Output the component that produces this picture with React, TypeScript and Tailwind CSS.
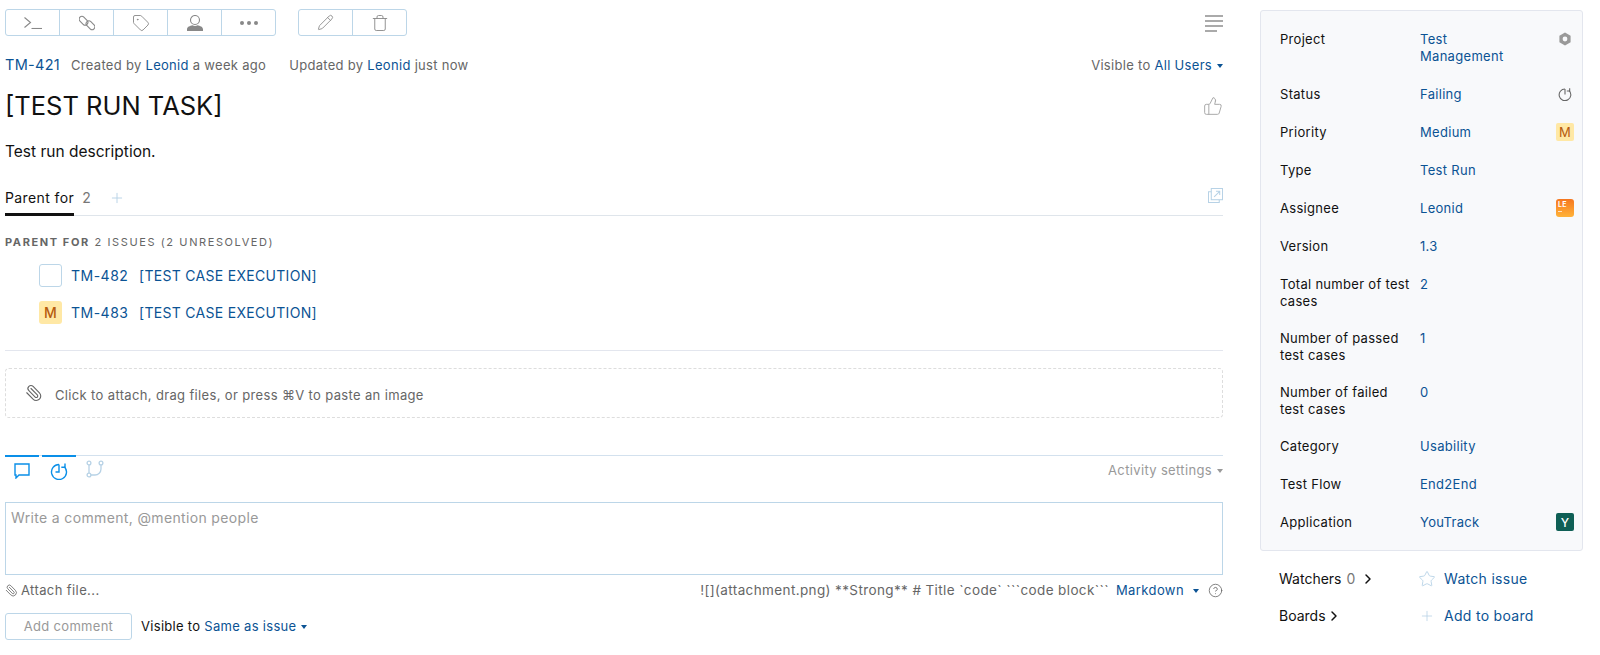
import { ChevronRight, CircleHelp, Paperclip, Pencil, Plus, Star, Tag, ThumbsUp, Trash } from "lucide-react";

const link = "text-[#0b5394]";

function Caret() {
  return <span className="ml-[5px] inline-block h-0 w-0 border-x-[3px] border-t-[4px] border-x-transparent border-t-current align-middle" />;
}

function HistoryIcon({ className, full }: { className: string; full?: boolean }) {
  return (
    <svg viewBox="0 0 18 18" fill="none" stroke="currentColor" strokeWidth="1.4" className={className}>
      <path d="M9 2.500A7.500 7.500 0 1 0 14.300 4.700" />
      <path d={full ? "M9 2.500v7.500H5.500" : "M9 2.500v7"} />
      <path d="M15 1.500v3.700H11.300" />
    </svg>
  );
}

const toolbarOne = [
  <svg key="t" viewBox="0 0 18 12" fill="none" stroke="#888" strokeWidth="1.1" className="h-[12px] w-[18px]"><path d="M.5 .5l6 5-6 5" /><path d="M7.500 11.500H18" /></svg>,
  <svg key="l" viewBox="0 0 16 16" fill="none" stroke="#888" strokeWidth="1.1" className="h-[16px] w-[16px]"><rect x="-.5" y="3" width="10" height="5.500" rx="2.750" transform="rotate(45 4.500 5.750)" /><rect x="6.500" y="7.500" width="10" height="5.500" rx="2.750" transform="rotate(45 11.500 10.250)" /></svg>,
  <Tag key="g" className="h-[18px] w-[18px] text-[#888]" strokeWidth={1.2} />,
  <svg key="u" viewBox="0 0 16 16" className="h-[16px] w-[16px]"><ellipse cx="8" cy="5" rx="4.500" ry="4.500" fill="none" stroke="#888" strokeWidth="1.1" /><path d="M0 16v-1.800c0-2.400 3-3.400 5.500-4 1.400 1 3.600 1 5 0 2.500.6 5.500 1.600 5.500 4V16z" fill="#888" /></svg>,
  <span key="d" className="flex gap-[3px]">{[0, 1, 2].map((i) => <span key={i} className="h-[4px] w-[4px] rounded-full bg-[#888]" />)}</span>,
];

const fields: { label: string; value: string; icon?: React.ReactNode; tall?: boolean }[] = [
  { label: "Project", value: "Test Management", icon: <svg viewBox="0 0 14 14" className="h-[14px] w-[14px]"><path d="M7 .5l5.600 3.200v6.600L7 13.500 1.400 10.300V3.700z" fill="#999" /><circle cx="7" cy="7" r="2.400" fill="#f8f9fb" /></svg> },
  { label: "Status", value: "Failing", icon: <HistoryIcon className="h-[14px] w-[14px] text-[#666]" /> },
  { label: "Priority", value: "Medium", icon: <span className="flex h-[18px] w-[18px] items-center justify-center rounded-[2px] bg-[#ffe8a5] text-[13px] text-[#b65a0e]">M</span> },
  { label: "Type", value: "Test Run" },
  { label: "Assignee", value: "Leonid", icon: <span className="flex h-[18px] w-[18px] flex-col rounded-[3px] bg-gradient-to-b from-[#f5761f] to-[#ffb238] pl-[2px] pt-[2px] text-[7px] leading-[8px] font-bold text-white">LE<span className="mt-[2px] h-px w-[4px] bg-white/70" /></span> },
  { label: "Version", value: "1.3" },
  { label: "Total number of test cases", value: "2", tall: true },
  { label: "Number of passed test cases", value: "1", tall: true },
  { label: "Number of failed test cases", value: "0", tall: true },
  { label: "Category", value: "Usability" },
  { label: "Test Flow", value: "End2End" },
  { label: "Application", value: "YouTrack", icon: <span className="flex h-[18px] w-[18px] items-center justify-center rounded-[2px] bg-[#0f5f55] text-[12px] font-medium text-white">Y</span> },
];

export default function App() {
  return (
    <div className="flex h-[655px] gap-[37px] overflow-hidden bg-white pl-[5px] text-[13px] tracking-[0.3px] text-[#1a1a1a] font-['Inter',sans-serif]">
      <main className="w-[1218px] shrink-0">
        <div className="flex items-center justify-between pt-[9px]">
          <div className="flex gap-[22px]">
            <div className="flex h-[27px] w-[271px] rounded-[3px] border border-[#bcd6e8]">
              {toolbarOne.map((icon, i) => (
                <span key={i} className="flex flex-1 items-center justify-center border-r border-[#bcd6e8] last:border-r-0">{icon}</span>
              ))}
            </div>
            <div className="flex h-[27px] w-[109px] rounded-[3px] border border-[#bcd6e8]">
              <span className="flex flex-1 items-center justify-center border-r border-[#bcd6e8]"><Pencil className="h-[17px] w-[17px] text-[#888]" strokeWidth={1.2} /></span>
              <span className="flex flex-1 items-center justify-center"><Trash className="h-[18px] w-[18px] text-[#888]" strokeWidth={1.2} /></span>
            </div>
          </div>
          <div className="mt-px flex w-[18px] flex-col gap-[3px]">
            {[18, 18, 18, 12].map((w, i) => <span key={i} className="h-[2px] bg-[#aaa]" style={{ width: w }} />)}
          </div>
        </div>

        <div className="mt-[19px] flex items-center justify-between leading-[20px] text-[#666]">
          <div className="flex">
            <span className={`${link} w-[66px] text-[14.500px]`}>TM-421</span>
            <span>Created by <span className={link}>Leonid</span> a week ago</span>
            <span className="ml-[23px]">Updated by <span className={link}>Leonid</span> just now</span>
          </div>
          <span>Visible to <span className={link}>All Users</span><span className={link}><Caret /></span></span>
        </div>

        <div className="mt-[15px] flex items-center justify-between">
          <h1 className="text-[25.500px] leading-[32px] tracking-normal text-[#111]">[TEST RUN TASK]</h1>
          <ThumbsUp className="h-[20px] w-[20px] text-[#aaa]" strokeWidth={1.2} />
        </div>
        <p className="mt-[20px] text-[15.500px] leading-[20px] tracking-normal text-[#111]">Test run description.</p>

        <div className="mt-[26px] flex h-[28px] items-start justify-between border-b border-[#dfe5eb]">
          <div className="flex items-start text-[14px] leading-[20px] tracking-[0.4px]">
            <span className="h-[28px] border-b-[3px] border-[#111] text-[#111]">Parent for</span>
            <span className="ml-[8px] text-[#777]">2</span>
            <Plus className="ml-[18px] mt-[2px] h-[16px] w-[16px] text-[#b7d2e6]" strokeWidth={1.4} />
          </div>
          <svg viewBox="0 0 16 16" fill="none" stroke="#b7d2e6" strokeWidth="1.100" className="h-[15px] w-[15px]">
            <rect x="3.500" y=".5" width="12" height="12" />
            <path d="M3.500 4H.5v11.500H12v-3" />
            <path d="M6.500 9.500L12.500 3.500M8.500 3.500h4v4" />
          </svg>
        </div>

        <div className="mt-[19px] text-[11px] leading-[14px] tracking-[1.6px] text-[#666]"><b>PARENT FOR</b> 2 ISSUES (2 UNRESOLVED)</div>

        <div className="mt-[15px] flex items-center pl-[34px] text-[14px] text-[#0b5394]">
          <span className="h-[23px] w-[23px] rounded-[3px] border border-[#bcd6e8]" />
          <span className="ml-[9px] w-[68px] tracking-[0.5px]">TM-482</span>
          <span>[TEST CASE EXECUTION]</span>
        </div>
        <div className="mt-[14px] flex items-center pl-[34px] text-[14px] text-[#0b5394]">
          <span className="flex h-[23px] w-[23px] items-center justify-center rounded-[3px] bg-[#ffe8a5] text-[14px] font-medium text-[#b65a0e]">M</span>
          <span className="ml-[9px] w-[68px] tracking-[0.5px]">TM-483</span>
          <span>[TEST CASE EXECUTION]</span>
        </div>

        <div className="mt-[26px] border-t border-[#e3e6ee]" />

        <div className="mt-[17px] flex h-[50px] items-center rounded-[4px] border border-dashed border-[#dddddd] pl-[19px] text-[#666]">
          <Paperclip className="h-[18px] w-[18px] -scale-x-100 text-[#666]" strokeWidth={1.5} />
          <span className="ml-[12px] pt-[6px] tracking-[0.35px]">Click to attach, drag files, or press ⌘V to paste an image</span>
        </div>

        <div className="relative mt-[37px] flex h-[47px] justify-between border-t border-[#d3e1ee]">
          <div className="flex items-start gap-[3px]">
            <span className="-mt-px flex w-[34px] justify-center border-t-2 border-[#0a8fe8] pt-[6px]">
              <svg viewBox="0 0 16 16" fill="none" stroke="#0a8fe8" strokeWidth="1.400" className="h-[16px] w-[16px]"><path d="M1 1h14v11H5l-3 3v-3H1z" /></svg>
            </span>
            <span className="-mt-px flex w-[34px] justify-center border-t-2 border-[#0a8fe8] pt-[5px]"><HistoryIcon full className="h-[18px] w-[18px] text-[#0a8fe8]" /></span>
            <span className="ml-[4px] flex w-[24px] justify-center pt-[4px]">
              <svg viewBox="0 0 18 18" fill="none" stroke="#b7d2e6" strokeWidth="1.300" className="h-[18px] w-[18px]">
                <circle cx="3" cy="3" r="1.900" />
                <circle cx="15" cy="3" r="1.900" />
                <circle cx="3" cy="15" r="1.900" />
                <path d="M3 4.900v8.200M4.900 15H9a6 6 0 0 0 6-6V4.900" />
              </svg>
            </span>
          </div>
          <span className="pt-[4px] leading-[20px] tracking-[0.35px] text-[#999]">Activity settings<Caret /></span>
        </div>

        <div className="h-[73px] border border-[#bcd6e8] px-[5px] py-[5px] text-[14px] leading-[20px] tracking-[0.35px] text-[#999]">Write a comment, @mention people</div>

        <div className="mt-[6px] flex items-center justify-between leading-[18px] text-[#666]">
          <span className="flex items-center tracking-[0.4px]"><Paperclip className="mr-[3px] h-[13px] w-[13px] -scale-x-100" strokeWidth={1.5} />Attach file...</span>
          <span className="flex items-center text-[13.500px] tracking-[0.38px]">
            ![](attachment.png) **Strong** # Title `code` ```code block```
            <span className={`${link} ml-[7px] text-[13px] tracking-[0.4px]`}>Markdown</span>
            <span className={`${link} ml-[4px]`}><Caret /></span>
            <CircleHelp className="ml-[9px] h-[15px] w-[15px]" strokeWidth={1.3} />
          </span>
        </div>

        <div className="mt-[14px] flex items-center">
          <span className="flex h-[27px] w-[127px] items-center justify-center rounded-[3px] border border-[#bcd6e8] text-[#999]">Add comment</span>
          <span className="ml-[9px] text-[#111]">Visible to <span className={link}>Same as issue</span><span className={link}><Caret /></span></span>
        </div>
      </main>

      <aside className="w-[323px] shrink-0 pt-[10px]">
        <div className="rounded-[3px] border border-[#e3e6ee] bg-[#f8f9fb] pb-[19px] pl-[19px] pr-[8px] pt-[20px]">
          {fields.map((f) => (
            <div key={f.label} className={`flex leading-[17px] last:mb-0 ${f.tall ? "mb-[20px]" : "mb-[21px]"}`}>
              <span className="w-[140px] shrink-0 pr-[5px] text-[#111]">{f.label}</span>
              <span className={`${link} w-[100px]`}>{f.value}</span>
              <span className="-mt-px ml-auto flex h-[18px] w-[18px] items-center justify-center">{f.icon}</span>
            </div>
          ))}
        </div>
        <div className="mt-[18px] flex pl-[19px] leading-[20px]">
          <span className="flex w-[139px] items-center text-[14px] tracking-normal text-[#111]">Watchers <span className="ml-[5px] text-[#777]">0</span><ChevronRight className="ml-[5px] h-[16px] w-[16px]" strokeWidth={2.2} /></span>
          <span className={`flex items-center text-[14px] ${link}`}><Star className="mr-[8px] h-[18px] w-[18px] text-[#b7d2e6]" strokeWidth={1.2} />Watch issue</span>
        </div>
        <div className="mt-[17px] flex pl-[19px] leading-[20px]">
          <span className="flex w-[140px] items-center text-[14px] tracking-normal text-[#111]">Boards<ChevronRight className="h-[16px] w-[16px]" strokeWidth={2.2} /></span>
          <span className={`flex items-center text-[14px] ${link}`}><Plus className="mr-[9px] h-[16px] w-[16px] text-[#b7d2e6]" strokeWidth={1.2} />Add to board</span>
        </div>
      </aside>
    </div>
  );
}
